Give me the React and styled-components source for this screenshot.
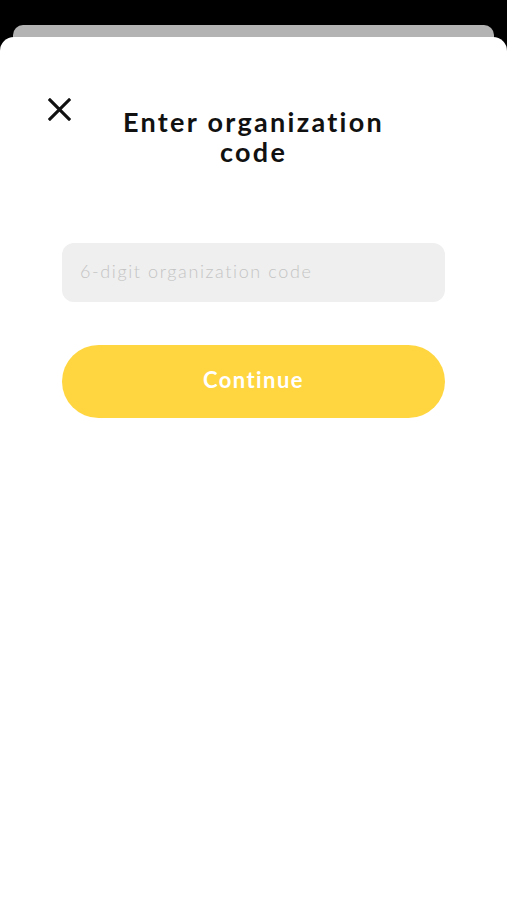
import React from "react";
import styled, { createGlobalStyle } from "styled-components";

const Global = createGlobalStyle`
  html, body { margin: 0; padding: 0; background: #000; }
  body { font-family: "Lato", "Noto Sans", sans-serif; }
  #root { min-height: 900px; }
`;

const Screen = styled.div`
  width: 507px;
  height: 900px;
  background: #000;
  padding-top: 25px;
  box-sizing: border-box;
  display: flex;
  flex-direction: column;
  overflow: hidden;
`;

const BackSheet = styled.div`
  margin: 0 13px;
  height: 24px;
  background: #b3b3b3;
  border-radius: 10px 10px 0 0;
  margin-bottom: -12px;
`;

const Sheet = styled.div`
  flex: 1;
  background: #fff;
  border-radius: 14px 14px 0 0;
  display: flex;
  flex-direction: column;
  align-items: center;
  padding: 58px 62px 0;
  position: relative;
`;

const Header = styled.div`
  width: 100%;
  position: relative;
  display: flex;
  justify-content: center;
`;

const Close = styled.button`
  position: absolute;
  left: -18px;
  top: -1px;
  width: 30px;
  height: 30px;
  border: none;
  background: none;
  padding: 0;
  display: flex;
  align-items: center;
  justify-content: center;
  cursor: pointer;
`;

const Title = styled.h1`
  margin: 12px 0 0;
  font-size: 27px;
  line-height: 30px;
  font-weight: 700;
  color: #111;
  text-align: center;
  width: 310px;
  letter-spacing: 2.3px;
`;

const Input = styled.input`
  margin-top: 76px;
  width: 100%;
  height: 59px;
  box-sizing: border-box;
  border: none;
  border-radius: 12px;
  background: #efefef;
  padding: 0 18px 3px;
  font-family: "Lato", "Noto Sans", sans-serif;
  font-size: 18px;
  font-weight: 300;
  letter-spacing: 1.6px;
  color: #333;
  outline: none;
  &::placeholder { color: #c4c4c4; }
`;

const Button = styled.button`
  margin-top: 43px;
  width: 100%;
  height: 73px;
  border: none;
  border-radius: 37px;
  background: #ffd640;
  color: #fff;
  font-family: "Lato", "Noto Sans", sans-serif;
  font-size: 22px;
  font-weight: 700;
  letter-spacing: 1.4px;
  padding: 0 0 5px;
  cursor: pointer;
`;

export default function App() {
  return (
    <>
      <Global />
      <Screen>
        <BackSheet />
        <Sheet>
          <Header>
            <Close aria-label="Close">
              <svg width="23" height="23" viewBox="0 0 24 24">
                <path d="M2 2 L22 22 M22 2 L2 22" stroke="#111" strokeWidth="3.2" strokeLinecap="square" />
              </svg>
            </Close>
            <Title>Enter organization code</Title>
          </Header>
          <Input placeholder="6-digit organization code" />
          <Button>Continue</Button>
        </Sheet>
      </Screen>
    </>
  );
}
